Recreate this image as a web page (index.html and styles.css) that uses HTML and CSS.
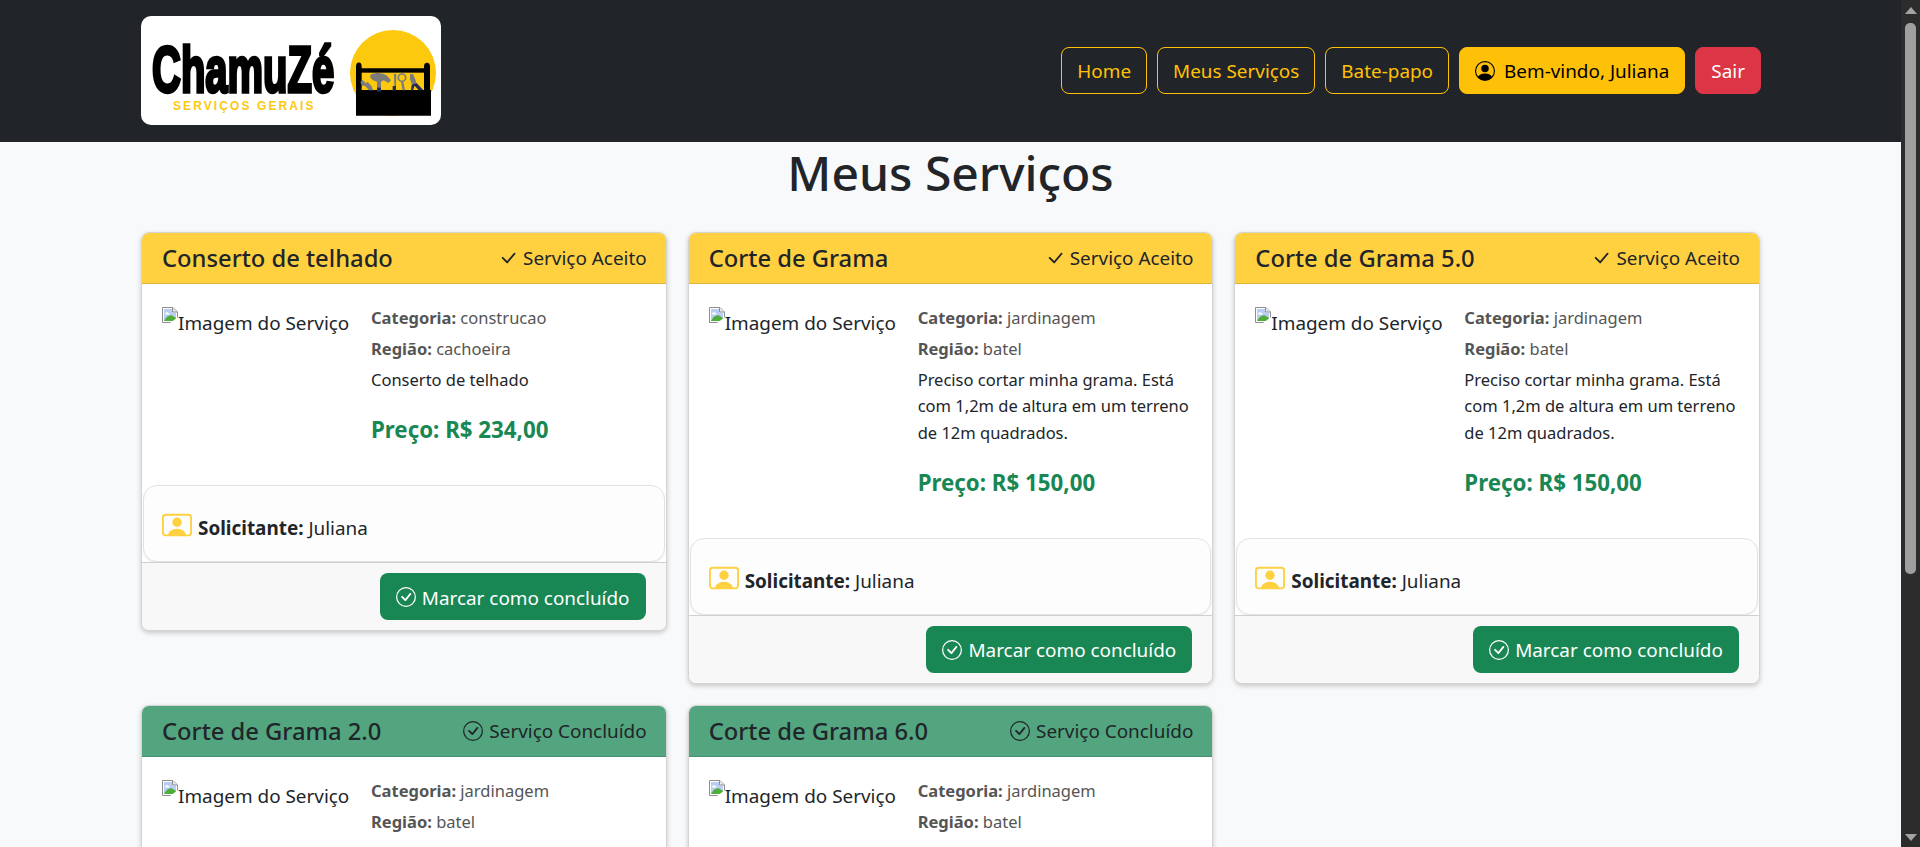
FILE: index.html
```html
<!DOCTYPE html>
<html lang="pt-BR">
  <head>
    <meta charset="UTF-8" />
    <meta name="viewport" content="width=device-width, initial-scale=1" />
    <title>Meus Serviços</title>
    <link rel="stylesheet" href="styles.css">
  </head>
  <body>
    <svg class="icon-defs" width="0" height="0">
      <symbol id="i-check" viewBox="0 0 16 16">
        <path d="M12.736 3.97a.733.733 0 0 1 1.047 0c.286.289.29.756.01 1.05L7.88 12.01a.733.733 0 0 1-1.065.02L3.217 8.384a.757.757 0 0 1 0-1.06.733.733 0 0 1 1.047 0l3.052 3.093 5.4-6.425a.247.247 0 0 1 .02-.022Z" />
      </symbol>
      <symbol id="i-check-circle" viewBox="0 0 16 16">
        <path d="M8 15A7 7 0 1 1 8 1a7 7 0 0 1 0 14zm0 1A8 8 0 1 0 8 0a8 8 0 0 0 0 16z" />
        <path d="M10.97 4.97a.235.235 0 0 0-.02.022L7.477 9.417 5.384 7.323a.75.75 0 0 0-1.06 1.06L6.97 11.03a.75.75 0 0 0 1.079-.02l3.992-4.99a.75.75 0 0 0-1.071-1.05z" />
      </symbol>
      <symbol id="i-person-circle" viewBox="0 0 16 16">
        <path d="M11 6a3 3 0 1 1-6 0 3 3 0 0 1 6 0z" />
        <path fill-rule="evenodd" d="M0 8a8 8 0 1 1 16 0A8 8 0 0 1 0 8zm8-7a7 7 0 0 0-5.468 11.37C3.242 11.226 4.805 10 8 10s4.757 1.225 5.468 2.37A7 7 0 0 0 8 1z" />
      </symbol>
      <symbol id="i-person-video" viewBox="0 0 16 16">
        <path d="M8 9.05a2.5 2.5 0 1 0 0-5 2.5 2.5 0 0 0 0 5Z" />
        <path d="M2 2a2 2 0 0 0-2 2v8a2 2 0 0 0 2 2h12a2 2 0 0 0 2-2V4a2 2 0 0 0-2-2H2Zm10.798 11c-.453-1.27-1.76-3-4.798-3-3.037 0-4.345 1.73-4.798 3H2a1 1 0 0 1-1-1V4a1 1 0 0 1 1-1h12a1 1 0 0 1 1 1v8a1 1 0 0 1-1 1h-1.202Z" />
      </symbol>
      <symbol id="i-broken" viewBox="0 0 16 16">
        <path d="M.5.5h10.5l4.5 4.5v10.5H.5z" fill="#fff" stroke="#8e8e8e" />
        <path d="M2 2h8.300v3.700H14v8.300H2z" fill="#b9cdf5" />
        <path d="M3 6.500c1-1.500 2.500-1.500 3.500-.5 1 .2 1.500 1 1 1.500H3.500z" fill="#fff" />
        <path d="M2 14c2-4 5-6.500 8-5.500l4 2.500v3z" fill="#4fae3a" />
        <path d="M10.5.5v4.500h5" fill="#e8e8e8" stroke="#8e8e8e" />
        <path d="M8 16l8-6v6z" fill="#fff" />
      </symbol>
    </svg>

    <div class="page">
      <div class="content">
        <header class="navbar">
          <a class="logo" href="#">
            <svg width="300" height="109" viewBox="0 0 300 109">
              <text class="logo-name" transform="translate(11 76) scale(0.625 1)">ChamuZé</text>
              <text class="logo-sub" x="32" y="94">SERVIÇOS GERAIS</text>
              <g transform="translate(204 9) scale(0.3333)">
                <circle cx="144" cy="144" r="129" fill="#fcc90f" />
                <path d="M33 272V125a8 12 0 0 1 17 0v5h187v-5a9 12 0 0 1 18 0v70h3v77z" fill="#000" />
                <rect x="50" y="143" width="187" height="52" fill="#fcc90f" />
                <path d="M53 165l10 10 5-5 12 14 4 12h-12l-12-14-8 0-6-10z" fill="#7b7b7b" />
                <path d="M76 150c15-8 35-8 50 2l12 14-8 8-14-8-8 4v26H96v-26l-12-4-8-8z" fill="#7b7b7b" />
                <rect x="96" y="188" width="12" height="12" fill="#272d55" />
                <path d="M147 147h7l-1 36h-5z" fill="#7b7b7b" />
                <rect x="143" y="183" width="10" height="14" fill="#272d55" />
                <circle cx="171" cy="158" r="11" fill="none" stroke="#7b7b7b" stroke-width="5" />
                <path d="M168 170h7l5 26h-7z" fill="#7b7b7b" />
                <path d="M195 147l9 0 10 24-5 8h-8l-6-16z" fill="#7b7b7b" />
                <path d="M200 179l-2 17h6l5-14 12 14h14l-20-22z" fill="#272d55" />
              </g>
            </svg>
          </a>
          <nav class="nav-buttons">
            <a class="btn btn-outline" href="#">Home</a>
            <a class="btn btn-outline" href="#">Meus Serviços</a>
            <a class="btn btn-outline" href="#">Bate-papo</a>
            <a class="btn btn-user" href="#"><svg class="ico-user"><use href="#i-person-circle" /></svg>Bem-vindo, Juliana</a>
            <a class="btn btn-exit" href="#">Sair</a>
          </nav>
        </header>

        <main class="container">
          <h1>Meus Serviços</h1>
          <div class="card-grid">

            <article class="card">
              <div class="card-header accepted">
                <h2>Conserto de telhado</h2>
                <span class="status"><svg class="ico-status"><use href="#i-check" /></svg>Serviço Aceito</span>
              </div>
              <div class="card-body">
                <div class="thumb"><svg class="ico-broken"><use href="#i-broken" /></svg><span>Imagem do Serviço</span></div>
                <div class="info">
                  <p class="meta"><strong>Categoria:</strong> construcao</p>
                  <p class="meta"><strong>Região:</strong> cachoeira</p>
                  <p class="desc">Conserto de telhado</p>
                  <p class="price">Preço: R$ 234,00</p>
                </div>
              </div>
              <div class="requester"><svg class="ico-person"><use href="#i-person-video" /></svg><span><strong>Solicitante:</strong> Juliana</span></div>
              <div class="card-footer">
                <a class="btn btn-done" href="#"><svg class="ico-done"><use href="#i-check-circle" /></svg>Marcar como concluído</a>
              </div>
            </article>

            <article class="card">
              <div class="card-header accepted">
                <h2>Corte de Grama</h2>
                <span class="status"><svg class="ico-status"><use href="#i-check" /></svg>Serviço Aceito</span>
              </div>
              <div class="card-body">
                <div class="thumb"><svg class="ico-broken"><use href="#i-broken" /></svg><span>Imagem do Serviço</span></div>
                <div class="info">
                  <p class="meta"><strong>Categoria:</strong> jardinagem</p>
                  <p class="meta"><strong>Região:</strong> batel</p>
                  <p class="desc">Preciso cortar minha grama. Está com 1,2m de altura em um terreno de 12m quadrados.</p>
                  <p class="price">Preço: R$ 150,00</p>
                </div>
              </div>
              <div class="requester"><svg class="ico-person"><use href="#i-person-video" /></svg><span><strong>Solicitante:</strong> Juliana</span></div>
              <div class="card-footer">
                <a class="btn btn-done" href="#"><svg class="ico-done"><use href="#i-check-circle" /></svg>Marcar como concluído</a>
              </div>
            </article>

            <article class="card">
              <div class="card-header accepted">
                <h2>Corte de Grama 5.0</h2>
                <span class="status"><svg class="ico-status"><use href="#i-check" /></svg>Serviço Aceito</span>
              </div>
              <div class="card-body">
                <div class="thumb"><svg class="ico-broken"><use href="#i-broken" /></svg><span>Imagem do Serviço</span></div>
                <div class="info">
                  <p class="meta"><strong>Categoria:</strong> jardinagem</p>
                  <p class="meta"><strong>Região:</strong> batel</p>
                  <p class="desc">Preciso cortar minha grama. Está com 1,2m de altura em um terreno de 12m quadrados.</p>
                  <p class="price">Preço: R$ 150,00</p>
                </div>
              </div>
              <div class="requester"><svg class="ico-person"><use href="#i-person-video" /></svg><span><strong>Solicitante:</strong> Juliana</span></div>
              <div class="card-footer">
                <a class="btn btn-done" href="#"><svg class="ico-done"><use href="#i-check-circle" /></svg>Marcar como concluído</a>
              </div>
            </article>

            <article class="card">
              <div class="card-header finished">
                <h2>Corte de Grama 2.0</h2>
                <span class="status"><svg class="ico-status-done"><use href="#i-check-circle" /></svg>Serviço Concluído</span>
              </div>
              <div class="card-body">
                <div class="thumb"><svg class="ico-broken"><use href="#i-broken" /></svg><span>Imagem do Serviço</span></div>
                <div class="info">
                  <p class="meta"><strong>Categoria:</strong> jardinagem</p>
                  <p class="meta"><strong>Região:</strong> batel</p>
                  <p class="desc">Preciso cortar minha grama. Está com 1,2m de altura em um terreno de 12m quadrados.</p>
                </div>
              </div>
            </article>

            <article class="card">
              <div class="card-header finished">
                <h2>Corte de Grama 6.0</h2>
                <span class="status"><svg class="ico-status-done"><use href="#i-check-circle" /></svg>Serviço Concluído</span>
              </div>
              <div class="card-body">
                <div class="thumb"><svg class="ico-broken"><use href="#i-broken" /></svg><span>Imagem do Serviço</span></div>
                <div class="info">
                  <p class="meta"><strong>Categoria:</strong> jardinagem</p>
                  <p class="meta"><strong>Região:</strong> batel</p>
                  <p class="desc">Preciso cortar minha grama. Está com 1,2m de altura em um terreno de 12m quadrados.</p>
                </div>
              </div>
            </article>

          </div>
        </main>
      </div>

      <!-- window scrollbar from the screenshot -->
      <div class="scrollbar">
        <div class="arrow-up"></div>
        <div class="thumb-bar"></div>
        <div class="arrow-down"></div>
      </div>
    </div>
  </body>
</html>
```

FILE: styles.css
```css
* {
  box-sizing: border-box;
}

body {
  margin: 0;
  font-family: "Noto Sans", "Open Sans", sans-serif;
  font-size: 18.900px;
  line-height: 26.4px;
  color: #212529;
  background-color: #f8f9fa;
}

a {
  text-decoration: none;
}

.icon-defs {
  position: absolute;
}

.page {
  display: flex;
  height: 100vh;
  overflow: hidden;
}

.content {
  flex: 1;
  min-width: 0;
  overflow: hidden;
}

/* Scrollbar */
.scrollbar {
  width: 19px;
  flex: none;
  background-color: #2c2c2c;
  display: flex;
  flex-direction: column;
  align-items: center;
  padding: 7px 0 6px;
}

.arrow-up,
.arrow-down {
  width: 0;
  height: 0;
  border-left: 6.500px solid transparent;
  border-right: 6.500px solid transparent;
}

.arrow-up {
  border-bottom: 7px solid #a3a3a3;
}

.arrow-down {
  border-top: 7px solid #a3a3a3;
  margin-top: auto;
}

.thumb-bar {
  width: 11px;
  height: 551px;
  margin-top: 9px;
  background-color: #9f9f9f;
  border-radius: 5px;
}

/* Header */
.navbar {
  height: 142px;
  background-color: #212529;
  padding: 16px 140px 0 141px;
  display: flex;
  justify-content: space-between;
  align-items: flex-start;
}

.logo {
  display: block;
  width: 300px;
  height: 109px;
  background-color: #fff;
  border-radius: 10px;
}

.logo-name {
  font-family: "Liberation Sans", sans-serif;
  font-size: 64px;
  font-weight: 700;
  fill: #000;
  stroke: #000;
  stroke-width: 3.500px;
}

.logo-sub {
  font-family: "Liberation Sans", sans-serif;
  font-size: 12px;
  font-weight: 700;
  letter-spacing: 2.100px;
  fill: #fcc90f;
}

.nav-buttons {
  display: flex;
  gap: 10px;
  margin-top: 31px;
}

.btn {
  display: inline-flex;
  align-items: center;
  justify-content: center;
  height: 47px;
  padding: 2px 15px 0;
  border: 1px solid transparent;
  border-radius: 8px;
  white-space: nowrap;
}

.btn-outline {
  color: #ffc107;
  border-color: #ffc107;
}

.btn-user {
  color: #000;
  background-color: #ffc107;
  border-color: #ffc107;
}

.btn-exit {
  color: #fff;
  background-color: #dc3545;
  border-color: #dc3545;
}

.btn-done {
  color: #fff;
  background-color: #198754;
  width: 266px;
  padding: 2px 0 0;
}

.ico-user {
  width: 20px;
  height: 20px;
  margin: -2px 9px 0 0;
  fill: #000;
}

.ico-done {
  width: 20px;
  height: 20px;
  margin: -2px 6px 0 0;
  fill: #fff;
}

/* Page */
.container {
  padding: 0 141px;
}

h1 {
  margin: 2px 0 30px;
  height: 58px;
  font-size: 48px;
  line-height: 58px;
  font-weight: 500;
  text-align: center;
}

.card-grid {
  display: grid;
  grid-template-columns: repeat(3, 1fr);
  column-gap: 21px;
  row-gap: 21px;
  align-items: start;
}

.card {
  background-color: #fff;
  border: 1px solid #d4d4d4;
  border-radius: 8px;
  box-shadow: 0 2px 5px rgba(0, 0, 0, 0.2);
  overflow: hidden;
}

.card-header {
  height: 51px;
  padding: 0 19px 0 20px;
  display: flex;
  justify-content: space-between;
  align-items: center;
  border-bottom: 1px solid rgba(0, 0, 0, 0.125);
}

.accepted {
  background-color: #ffd141;
}

.finished {
  background-color: #52a57f;
}

h2 {
  margin: 0;
  font-size: 23.750px;
  line-height: 30px;
  font-weight: 500;
}

.status {
  display: flex;
  align-items: center;
}

.ico-status {
  width: 20px;
  height: 20px;
  margin-right: 5px;
  fill: #212529;
}

.ico-status-done {
  width: 20px;
  height: 20px;
  margin-right: 6px;
  fill: #212529;
}

.card-body {
  display: flex;
  gap: 19px;
  padding: 21px 20px 0;
}

.thumb {
  width: 190px;
  flex: none;
  display: flex;
  align-items: flex-start;
  height: 40px;
}

.ico-broken {
  width: 16px;
  height: 16px;
  flex: none;
  margin-top: 2px;
}

.thumb span {
  margin-top: 5px;
  white-space: nowrap;
}

.info {
  flex: 1;
  min-width: 0;
  font-size: 16.500px;
}

.info p {
  margin: 0 0 5px;
}

.meta {
  color: #555;
}

.meta strong {
  font-weight: 700;
}

.info .desc {
  margin: -1px 0 0;
}

.info .price {
  margin: 22px 0 40px;
  font-size: 22.300px;
  line-height: 30px;
  font-weight: 700;
  color: #198754;
}

.requester {
  height: 77px;
  margin: 0 1px;
  padding: 24px 18px 0;
  display: flex;
  align-items: flex-start;
  gap: 6px;
  background-color: #fdfdfd;
  border: 1px solid #e3e3e3;
  border-radius: 14px;
  box-shadow: 0 1px 2px rgba(0, 0, 0, 0.08);
}

.requester span {
  margin-top: 5px;
}

.ico-person {
  width: 30px;
  height: 30px;
  flex: none;
  fill: #ffd141;
}

.card-footer {
  padding: 10px 20px;
  display: flex;
  justify-content: flex-end;
  background-color: #f8f8f8;
  border-top: 1px solid #cfcfcf;
}
```
